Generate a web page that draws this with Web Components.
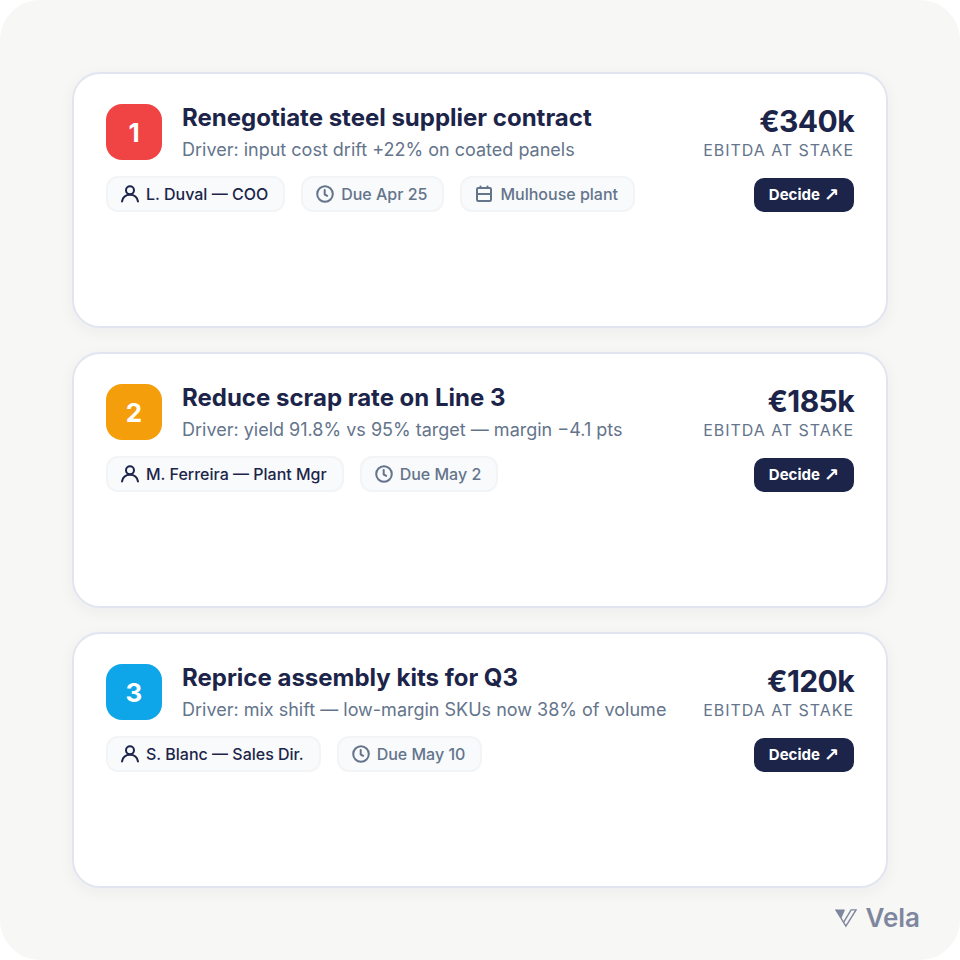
<!DOCTYPE html>
<html lang="en">
<head>
<meta charset="utf-8">
<meta name="viewport" content="width=device-width, initial-scale=1">
<title>Vela – Decisions</title>
<style>
  body { margin: 0; background: #fff; font-family: Inter, "Liberation Sans", sans-serif; color: #1c2549; }
</style>
</head>
<body>
<decision-board>
  <decision-card rank="1" tone="#f04444" heading="Renegotiate steel supplier contract" driver="Driver: input cost drift +22% on coated panels" amount="€340k">
    <info-chip icon="person" strong>L. Duval — COO</info-chip>
    <info-chip icon="clock">Due Apr 25</info-chip>
    <info-chip icon="calendar">Mulhouse plant</info-chip>
  </decision-card>
  <decision-card rank="2" tone="#f59e0b" heading="Reduce scrap rate on Line 3" driver="Driver: yield 91.8% vs 95% target — margin −4.1 pts" amount="€185k">
    <info-chip icon="person" strong>M. Ferreira — Plant Mgr</info-chip>
    <info-chip icon="clock">Due May 2</info-chip>
  </decision-card>
  <decision-card rank="3" tone="#0ea5e9" heading="Reprice assembly kits for Q3" driver="Driver: mix shift — low-margin SKUs now 38% of volume" amount="€120k">
    <info-chip icon="person" strong>S. Blanc — Sales Dir.</info-chip>
    <info-chip icon="clock">Due May 10</info-chip>
  </decision-card>
  <vela-brand slot="brand"></vela-brand>
</decision-board>

<script>
class DecisionBoard extends HTMLElement {
  constructor() {
    super();
    this.attachShadow({ mode: 'open' }).innerHTML = `
      <style>
        :host { display: block; position: relative; box-sizing: border-box; min-height: 100vh; padding: 72px; border-radius: 40px; background: #f7f7f5; }
        main { display: grid; grid-auto-rows: 1fr; gap: 24px; min-height: calc(100vh - 144px); }
        footer { position: absolute; right: 40px; bottom: 24px; }
      </style>
      <main><slot></slot></main>
      <footer><slot name="brand"></slot></footer>`;
  }
}

class DecisionCard extends HTMLElement {
  connectedCallback() {
    const a = n => this.getAttribute(n);
    this.attachShadow({ mode: 'open' }).innerHTML = `
      <style>
        :host { display: block; box-sizing: border-box; padding: 30px 32px; border: 2px solid #e2e5f0; border-radius: 28px; background: #fff; box-shadow: 0 4px 16px rgba(28, 37, 73, .05); }
        header { display: flex; gap: 20px; }
        .rank { flex: none; display: grid; place-items: center; width: 56px; height: 56px; border-radius: 16px; color: #fff; font-size: 26px; font-weight: 700; }
        .text { flex: 1; min-width: 0; }
        h2 { margin: 0; font-size: 24px; line-height: 28px; font-weight: 700; }
        p { margin: 8px 0 0; font-size: 18px; line-height: 20px; color: #64748b; }
        .stake { flex: none; text-align: right; }
        .amount { font-size: 30px; line-height: 34px; font-weight: 700; letter-spacing: -0.02em; }
        .label { margin-top: 2px; font-size: 16px; line-height: 20px; letter-spacing: 0.06em; color: #64748b; }
        .row { display: flex; justify-content: space-between; align-items: end; gap: 16px; margin-top: 16px; }
        .chips { display: flex; flex-wrap: wrap; gap: 16px; }
        button { flex: none; display: flex; align-items: center; gap: 4px; padding: 0 15px; height: 34px; border: 0; border-radius: 10px; background: #1c2549; color: #fff; font: 700 15px/34px Inter, "Liberation Sans", sans-serif; cursor: pointer; }
        .arrow { font-family: "DejaVu Sans", sans-serif; font-size: 18px; }
      </style>
      <header>
        <div class="rank" style="background:${a('tone')}">${a('rank')}</div>
        <div class="text"><h2>${a('heading')}</h2><p>${a('driver')}</p></div>
        <div class="stake"><div class="amount">${a('amount')}</div><div class="label">EBITDA AT STAKE</div></div>
      </header>
      <div class="row"><div class="chips"><slot></slot></div><button type="button">Decide <span class="arrow">↗</span></button></div>`;
  }
}

const ICONS = {
  person: '<circle cx="10" cy="6.3" r="4"/><path d="M2 17.5c.8-4.2 4-6.7 8-6.7s7.2 2.500 8 6.7"/>',
  clock: '<circle cx="10" cy="10" r="7.8"/><path d="M9.7 6v4.500l2.500 1.300"/>',
  calendar: '<rect x="3" y="4" width="14" height="13" rx="1.2"/><path d="M3 10h14M6.500 2.500v1.500M13.500 2.500v1.500"/>'
};

class InfoChip extends HTMLElement {
  connectedCallback() {
    this.attachShadow({ mode: 'open' }).innerHTML = `
      <style>
        :host { display: inline-flex; align-items: center; gap: 6px; box-sizing: border-box; height: 36px; padding: 0 15px 0 12px; border: 2px solid #f3f4f5; border-radius: 12px; background: #f8fafc; color: #64748b; font-size: 16px; line-height: 20px; font-weight: 500; white-space: nowrap; }
        :host([strong]) { color: #1c2549; }
        svg { flex: none; width: 20px; height: 20px; fill: none; stroke: currentColor; stroke-width: 2; stroke-linecap: round; stroke-linejoin: round; }
      </style>
      <svg viewBox="0 0 20 20" aria-hidden="true">${ICONS[this.getAttribute('icon')]}</svg><span><slot></slot></span>`;
  }
}

class VelaBrand extends HTMLElement {
  constructor() {
    super();
    this.attachShadow({ mode: 'open' }).innerHTML = `
      <style>
        :host { display: flex; align-items: center; gap: 8px; color: #7e879e; font-size: 26px; line-height: 36px; font-weight: 600; }
        svg { width: 22px; height: 20px; }
      </style>
      <svg viewBox="0 0 23 20" aria-hidden="true">
        <path d="M0 1H10L6 10Z" fill="currentColor"/>
        <path d="M1 1.500 11.400 18.500 22 1.500H16.800L9 14.500 M9.600 1.500 6.200 9.400" fill="none" stroke="currentColor" stroke-width="1.500"/>
      </svg><span>Vela</span>`;
  }
}

customElements.define('info-chip', InfoChip);
customElements.define('decision-card', DecisionCard);
customElements.define('vela-brand', VelaBrand);
customElements.define('decision-board', DecisionBoard);
</script>
</body>
</html>
